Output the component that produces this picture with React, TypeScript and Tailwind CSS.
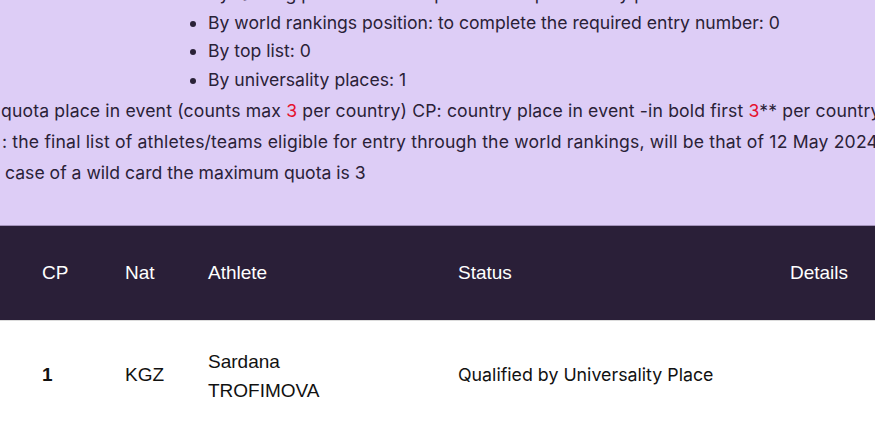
const body = { fontFamily: "Inter, 'Noto Sans', sans-serif" };
const table = { fontFamily: "'Liberation Sans', Arial, sans-serif" };

const bullets = [
  "By ranking position: to complete the required entry position: 2",
  "By world rankings position: to complete the required entry number: 0",
  "By top list: 0",
  "By universality places: 1",
];

export default function App() {
  return (
    <div className="h-[439px] w-[875px] overflow-hidden bg-white">
      {/* info box, scrolled so the first line is mostly hidden */}
      <div className="bg-[#ddcdf6] text-[17.6px] text-[#2a2137]" style={body}>
        <ul className="-mt-[20px] list-disc pl-[208px] leading-[28.5px] marker:text-[#2a2137]">
          {bullets.map((b) => (
            <li key={b} className="whitespace-nowrap">
              {b}
            </li>
          ))}
        </ul>
        <div className="mt-[1px] whitespace-nowrap pb-[37px] leading-[31px]">
          <p className="pl-[1px] tracking-[0.15px]">
            quota place in event (counts max <span className="text-[#e5122f]">3</span> per country) CP:
            country place in event -in bold first <span className="text-[#e5122f]">3</span>** per country
          </p>
          <p className="pl-[2px] tracking-[0.17px]">
            : the final list of athletes/teams eligible for entry through the world rankings, will be
            that of 12 May 2024
          </p>
          <p className="pl-[5px]">case of a wild card the maximum quota is 3</p>
        </div>
      </div>

      {/* results table */}
      <div className="border-t border-[#a493bb]" style={table}>
        <div className="flex h-[94px] items-center bg-[#2a1f38] text-[19px] text-white">
          <div className="w-[125px] pl-[42px]">CP</div>
          <div className="w-[83px]">Nat</div>
          <div className="w-[250px]">Athlete</div>
          <div className="flex-1">Status</div>
          <div className="pr-[27px]">Details</div>
        </div>
        <div className="flex h-[110px] items-center border-t border-[#dcdcdc] text-[19px] text-[#111]">
          <div className="w-[125px] pl-[42px] font-bold">1</div>
          <div className="w-[83px]">KGZ</div>
          <div className="w-[250px] leading-[29px]">
            <div>Sardana</div>
            <div>TROFIMOVA</div>
          </div>
          <div className="flex-1 text-[17.8px]" style={body}>
            Qualified by Universality Place
          </div>
        </div>
      </div>
    </div>
  );
}
